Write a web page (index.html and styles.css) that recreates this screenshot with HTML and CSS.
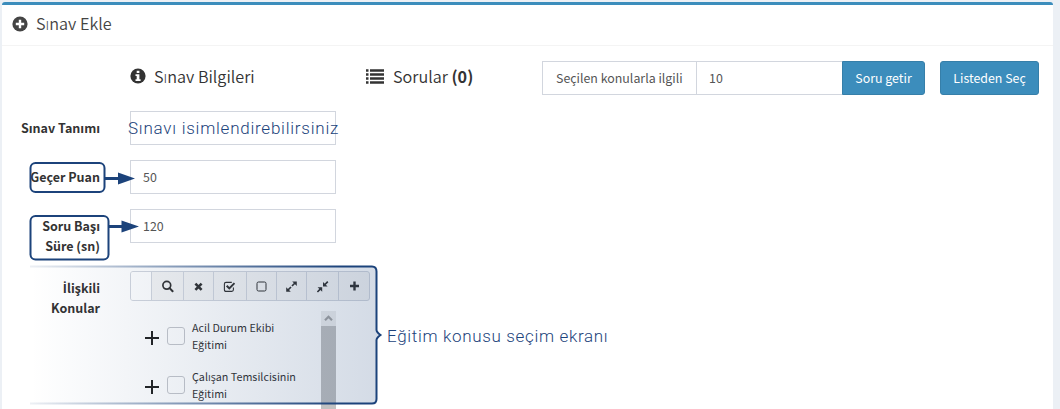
FILE: index.html
```html
<!DOCTYPE html>
<html lang="tr">
<head>
<meta charset="utf-8">
<title>Sınav Ekle</title>
<link rel="stylesheet" href="styles.css">
</head>
<body>
<main class="box">
  <header class="box-header">
    <svg class="icon-plus" width="16" height="16" viewBox="0 0 16 16"><circle cx="8" cy="8" r="7.6" fill="#444"/><path d="M8 3.8v8.4M3.8 8h8.4" stroke="#fff" stroke-width="2.4"/></svg>
    <h1 class="title">Sınav Ekle</h1>
  </header>
  <div class="box-body">
    <nav class="top-row">
      <div class="tab tab-info">
        <svg width="16" height="16" viewBox="0 0 16 16"><circle cx="8" cy="8" r="7.6" fill="#333"/><path d="M6.7 2.7h2.7v2.2H6.7zM5.5 6.2h3.9v5h1.2v1.9H5.5v-1.9h1.2V8H5.5z" fill="#fff"/></svg>
        <span>Sınav Bilgileri</span>
      </div>
      <div class="tab tab-list">
        <svg width="18" height="15" viewBox="0 0 18 15"><path d="M0 1.5h2.5M0 5.5h2.5M0 9.5h2.5M0 13.5h2.5M4 1.5h14M4 5.5h14M4 9.5h14M4 13.5h14" stroke="#333" stroke-width="2.4"/></svg>
        <span>Sorular <b>(0)</b></span>
      </div>
      <div class="fetch">
        <span class="addon">Seçilen konularla ilgili</span>
        <span class="count">10</span>
        <button class="btn btn-fetch">Soru getir</button>
      </div>
      <button class="btn btn-pick">Listeden Seç</button>
    </nav>
    <div class="form-row">
      <label class="label"><span>Sınav Tanımı</span></label>
      <div class="input"></div>
    </div>
    <div class="form-row">
      <label class="label"><span>Geçer Puan</span></label>
      <div class="input">50</div>
    </div>
    <div class="form-row">
      <label class="label"><span>Soru Başı</span><span>Süre (sn)</span></label>
      <div class="input">120</div>
    </div>
    <div class="form-row topics-row">
      <label class="label"><span><span class="dotted-cap">İ</span>lişkili</span><span>Konular</span></label>
      <div class="topics">
        <div class="toolbar">
          <span class="search-field"></span>
          <span class="tool w32"><svg width="13" height="13" viewBox="0 0 13 13"><circle cx="5.8" cy="5.3" r="3.9" fill="none" stroke="#333" stroke-width="1.7"/><path d="M8.6 8.1l3 3.2" stroke="#333" stroke-width="2" stroke-linecap="round"/></svg></span>
          <span class="tool w30"><svg width="13" height="13" viewBox="0 0 13 13"><path d="M3.4 3.6l6.2 6.2M9.6 3.6l-6.2 6.2" stroke="#333" stroke-width="2.6"/></svg></span>
          <span class="tool w33"><svg width="13" height="13" viewBox="0 0 13 13"><path d="M10.4 7.5v2.3q0 1.6-1.6 1.6H3q-1.6 0-1.6-1.6V4q0-1.6 1.6-1.6h5.8" fill="none" stroke="#333" stroke-width="1.1"/><path d="M3.7 5.8l2.6 2.6 5.2-5.3" fill="none" stroke="#333" stroke-width="2"/></svg></span>
          <span class="tool w31"><svg width="13" height="13" viewBox="0 0 13 13"><rect x="2" y="2" width="9" height="9" rx="1.5" fill="none" stroke="#333" stroke-width="1"/></svg></span>
          <span class="tool w30"><svg width="13" height="13" viewBox="0 0 13 13"><path d="M7.2 1.5h4.6v4.6zM1.2 7.2v4.6h4.6z" fill="#333"/><path d="M7 6l3-3M6 7l-3 3" stroke="#333" stroke-width="1.7"/></svg></span>
          <span class="tool w32"><svg width="13" height="13" viewBox="0 0 13 13"><path d="M7 1.9v4.6h4.6zM1.6 7.2h4.6v4.6z" fill="#333"/><path d="M8 5.5l3.8-3.8M5.2 8.2l-3.8 3.8" stroke="#333" stroke-width="1.7"/></svg></span>
          <span class="tool w31"><svg width="13" height="13" viewBox="0 0 13 13"><path d="M6.5 1.5v9M2 6h9" stroke="#333" stroke-width="2.4"/></svg></span>
        </div>
        <div class="tree">
          <div class="nodes">
            <div class="node"><i class="expand"></i><i class="check"></i><div class="node-text"><span>Acil Durum Ekibi</span><span>Eğitimi</span></div></div>
            <div class="node"><i class="expand"></i><i class="check"></i><div class="node-text"><span>Çalışan Temsilcisinin</span><span>Eğitimi</span></div></div>
          </div>
          <div class="scrollbar"><svg width="15" height="15" viewBox="0 0 15 15"><path d="M4 9.3l3.5-3.5L11 9.3" fill="none" stroke="#a3a3a3" stroke-width="2.2"/></svg></div>
        </div>
      </div>
    </div>
  </div>
</main>
<svg class="annotations" width="1060" height="409" viewBox="0 0 1060 409">
  <defs>
    <linearGradient id="fill" gradientUnits="userSpaceOnUse" x1="30" y1="0" x2="377" y2="0"><stop offset="0" stop-color="#1c437b" stop-opacity="0"/><stop offset="1" stop-color="#1c437b" stop-opacity=".19"/></linearGradient>
    <linearGradient id="edge" gradientUnits="userSpaceOnUse" x1="30" y1="0" x2="377" y2="0"><stop offset="0" stop-color="#1c437b" stop-opacity=".08"/><stop offset=".9" stop-color="#1c437b"/></linearGradient>
  </defs>
  <path d="M30 266.5H372q4.5 0 4.5 5V330q0 2 4 5-4 3-4 5V399q0 4.5-4.5 4.5H30" fill="url(#fill)" stroke="url(#edge)" stroke-width="2"/>
  <g fill="none" stroke="#1c437b" stroke-width="2">
    <rect x="30.5" y="163" width="74" height="29" rx="5"/>
    <rect x="30.5" y="216" width="78" height="43.5" rx="5"/>
  </g>
  <path d="M105 178.5H120M109 226.5H123" stroke="#1c437b" stroke-width="3"/>
  <path d="M118 172.5L135 178.5L118 184.5zM121.5 220.5L139 226.5L121.5 232.5z" fill="#1c437b"/>
</svg>
<div class="note note-name">Sınavı isimlendirebilirsiniz</div>
<div class="note note-topics">Eğitim konusu seçim ekranı</div>
</body>
</html>
```
FILE: styles.css
```css
* { box-sizing: border-box; }
body {
  margin: 0;
  height: 409px;
  overflow: hidden;
  padding: 2px 7px 0 2px;
  background: #ecf0f5;
  color: #333;
  font: 12.4px/20px "Noto Sans CJK JP", "Open Sans", sans-serif;
}
.box { height: 407px; overflow: hidden; background: #fff; border-top: 3px solid #3c8dbc; border-radius: 3px 3px 0 0; }
.box-header { display: flex; align-items: center; height: 41px; padding: 0 0 3px 10px; gap: 8px; border-bottom: 1px solid #f4f4f4; color: #444; }
.title { margin: 0; padding-bottom: 2px; font-size: 16.2px; font-weight: 350; line-height: 20px; }
.box-body { display: flex; flex-direction: column; gap: 15px; padding-top: 15px; }
.top-row { display: flex; height: 35px; align-items: flex-start; margin-left: 128px; }
.tab { display: flex; align-items: center; gap: 8px; height: 30px; font-size: 16.2px; font-weight: 350; white-space: nowrap; }
.tab span { padding-bottom: 1px; }
.tab b { font-weight: 700; }
.tab-info { width: 236px; }
.tab-list { width: 176px; gap: 9px; }
.fetch { display: flex; height: 34px; }
.addon { width: 155px; border: 1px solid #d2d6de; padding: 6px 0 0 13px; color: #555; white-space: nowrap; }
.count { width: 145px; border: solid #d2d6de; border-width: 1px 0; padding: 6px 12px; color: #555; }
.btn { height: 34px; padding: 0; border: 1px solid #367fa9; border-radius: 3px; background: #3c8dbc; color: #fff; font: inherit; white-space: nowrap; }
.btn-fetch { width: 83px; border-radius: 0 3px 3px 0; }
.btn-pick { width: 99px; margin-left: 15px; }
.form-row { display: flex; gap: 30px; height: 34px; }
.label { display: flex; flex-direction: column; align-items: flex-end; width: 98px; padding-top: 7px; font-size: 12.5px; font-weight: 700; white-space: nowrap; }
.dotted-cap { font-family: "Open Sans", sans-serif; line-height: 1; }
.input { width: 206px; height: 34px; border: 1px solid #d2d6de; padding: 6px 12px; color: #555; }
.topics-row { height: 138px; margin-top: 13px; }
.topics { width: 240px; }
.toolbar { display: flex; height: 30px; border: 1px solid #d2d6de; border-radius: 3px; background: #f4f4f4; overflow: hidden; }
.search-field { width: 20px; background: #fff; }
.tool { display: flex; align-items: center; justify-content: center; border-left: 1px solid #d2d6de; }
.w30 { width: 30px; }
.w31 { width: 31px; }
.w32 { width: 32px; }
.w33 { width: 33px; }
.tree { display: flex; justify-content: space-between; width: 206px; height: 98px; margin-top: 10px; }
.nodes { display: flex; flex-direction: column; gap: 15px; padding: 9px 0 0 15px; }
.node { display: flex; height: 34px; }
.expand { width: 14px; height: 14px; margin: 11px 8px 0 0; background: linear-gradient(#222, #222) 0 6px / 14px 2px no-repeat, linear-gradient(#222, #222) 6px 0 / 2px 14px no-repeat; }
.check { width: 18px; height: 18px; margin: 7px 7px 0 0; border: 1px solid #c5c7cc; border-radius: 3px; background: #fff; }
.node-text { display: flex; flex-direction: column; font-size: 10.75px; line-height: 17px; white-space: nowrap; margin-top: -1px; }
.scrollbar { width: 15px; height: 98px; background: linear-gradient(#eee 15px, #c1c1c1 15px); }
.scrollbar svg { display: block; }
.annotations { position: absolute; left: 0; top: 0; }
.note { position: absolute; color: #1c437b; font: 300 17px/22px Roboto, sans-serif; white-space: nowrap; }
.note-name { left: 128px; top: 117px; letter-spacing: .76px; }
.note-topics { left: 387px; top: 325px; letter-spacing: .67px; }
```
